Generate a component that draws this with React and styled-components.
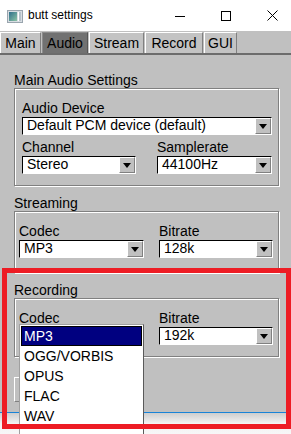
import styled, { createGlobalStyle } from "styled-components";

const GlobalStyle = createGlobalStyle`
  html, body {
    margin: 0;
    padding: 0;
  }
  body {
    width: 291px;
    height: 434px;
    overflow: hidden;
    background: #f6f6f6;
    font-family: "Liberation Sans", Arial, sans-serif;
  }
`;

const tabs = [
  { name: "Main", w: 41 },
  { name: "Audio", w: 46, active: true },
  { name: "Stream", w: 55 },
  { name: "Record", w: 58 },
  { name: "GUI", w: 33 },
];

const codecs = ["MP3", "OGG/VORBIS", "OPUS", "FLAC", "WAV"];

const Choice = ({ label, value }) => (
  <Field>
    <FieldLabel>{label}</FieldLabel>
    <ChoiceBox>
      <ChoiceText>{value}</ChoiceText>
      <ArrowButton>
        <Arrow />
      </ArrowButton>
    </ChoiceBox>
  </Field>
);

const AppIcon = () => (
  <svg width="16" height="13" viewBox="0 0 16 13">
    <defs>
      <linearGradient id="ico" x1="0" y1="0" x2="1" y2="1">
        <stop offset="0" stopColor="#2f6f8c" />
        <stop offset="1" stopColor="#8cc4a4" />
      </linearGradient>
    </defs>
    <rect x="0.5" y="0.5" width="15" height="12" fill="#d8dde2" stroke="#9aa5ae" />
    <rect x="2" y="2" width="8" height="9" fill="url(#ico)" />
    <rect x="11" y="2" width="1" height="9" fill="#fff" />
    <rect x="12" y="2" width="2" height="9" fill="#b7c3cc" />
  </svg>
);

export default function App() {
  return (
    <>
      <GlobalStyle />
      <Screen>
        <Window>
          <TitleBar>
            <IconSlot>
              <AppIcon />
            </IconSlot>
            <TitleText>butt settings</TitleText>
            <Controls>
              <ControlButton>
                <svg width="10" height="10" viewBox="0 0 10 10">
                  <line x1="0" y1="5.5" x2="10" y2="5.5" stroke="#000" />
                </svg>
              </ControlButton>
              <ControlButton>
                <svg width="10" height="10" viewBox="0 0 10 10">
                  <rect x="0.5" y="0.5" width="9" height="9" fill="none" stroke="#000" />
                </svg>
              </ControlButton>
              <ControlButton>
                <svg width="11" height="11" viewBox="0 0 11 11">
                  <path d="M0.5 0.5 L10.5 10.5 M10.5 0.5 L0.5 10.5" stroke="#000" strokeWidth="1" />
                </svg>
              </ControlButton>
            </Controls>
          </TitleBar>

          <TabBar>
            {tabs.map((t) => (
              <Tab key={t.name} $w={t.w} $active={t.active}>
                {t.name}
              </Tab>
            ))}
          </TabBar>

          <TabPanel>
            <SectionTitle>Main Audio Settings</SectionTitle>
            <Group $pad="12px 6px 11px 7px">
              <Choice label="Audio Device" value="Default PCM device (default)" />
              <Row $cols="114px 115px" $gap="21px">
                <Choice label="Channel" value="Stereo" />
                <Choice label="Samplerate" value="44100Hz" />
              </Row>
            </Group>

            <SectionTitle $top={10}>Streaming</SectionTitle>
            <Group $pad="12px 5px 14px 4px">
              <Row $cols="125px 114px" $gap="15px">
                <Choice label="Codec" value="MP3" />
                <Choice label="Bitrate" value="128k" />
              </Row>
            </Group>

            <SectionTitle $top={10}>Recording</SectionTitle>
            <Group $pad="12px 5px 11px 4px">
              <Row $cols="125px 114px" $gap="15px">
                <Choice label="Codec" value="MP3" />
                <Choice label="Bitrate" value="192k" />
              </Row>
            </Group>

            <PlainButton />
          </TabPanel>
        </Window>
        <Desktop />

        <Popup>
          {codecs.map((c, i) => (
            <MenuItem key={c} $sel={i === 0}>
              {c}
            </MenuItem>
          ))}
        </Popup>

        <RedMark />
      </Screen>
    </>
  );
}

const Screen = styled.div`
  position: relative;
  width: 291px;
  height: 434px;
  overflow: hidden;
`;

const Window = styled.div`
  box-sizing: border-box;
  height: 413px;
  display: flex;
  flex-direction: column;
  background: #fff;
  border-bottom: 1px solid #1883d7;
`;

const TitleBar = styled.div`
  height: 31px;
  flex: none;
  display: flex;
  align-items: center;
  background: #fff;
`;

const IconSlot = styled.div`
  display: flex;
  margin-left: 7px;
  margin-top: 1px;
`;

const TitleText = styled.div`
  margin-left: 5px;
  font-size: 12px;
  line-height: 14px;
  color: #000;
  margin-top: -1px;
`;

const Controls = styled.div`
  margin-left: auto;
  margin-right: -4px;
  display: flex;
`;

const ControlButton = styled.div`
  width: 46px;
  height: 31px;
  display: flex;
  align-items: center;
  justify-content: center;
`;

const TabBar = styled.div`
  box-sizing: border-box;
  height: 22px;
  flex: none;
  padding-top: 1px;
  display: flex;
  gap: 1px;
  background: #c0c0c0;
`;

const Tab = styled.div`
  box-sizing: border-box;
  width: ${(p) => p.$w}px;
  height: 21px;
  display: flex;
  align-items: center;
  justify-content: center;
  font-size: 14px;
  line-height: 16px;
  color: #000;
  background: ${(p) => (p.$active ? "#717171" : "#c3c3c3")};
  border-top: 1px solid ${(p) => (p.$active ? "#8c8c8c" : "#fff")};
  border-left: 1px solid ${(p) => (p.$active ? "#8c8c8c" : "#fff")};
  border-right: 1px solid ${(p) => (p.$active ? "#555" : "#808080")};
`;

const TabPanel = styled.div`
  flex: 1;
  display: flex;
  flex-direction: column;
  background: #c0c0c0;
  border-top: 2px solid #6c6c6c;
  padding-top: 18px;
`;

const SectionTitle = styled.div`
  margin-top: ${(p) => p.$top || 0}px;
  padding-left: 14px;
  font-size: 14px;
  line-height: 15px;
  color: #000;
`;

const Group = styled.div`
  margin: 0 12px 0 14px;
  padding: ${(p) => p.$pad};
  display: flex;
  flex-direction: column;
  gap: 5px;
  border: 1px solid #808080;
  box-shadow: inset 1px 1px 0 #fff, 1px 1px 0 #fff;
`;

const Row = styled.div`
  display: grid;
  grid-template-columns: ${(p) => p.$cols};
  column-gap: ${(p) => p.$gap};
`;

const Field = styled.div`
  display: flex;
  flex-direction: column;
  gap: 2px;
`;

const FieldLabel = styled.div`
  font-size: 14px;
  line-height: 14px;
  color: #000;
  white-space: nowrap;
`;

const ChoiceBox = styled.div`
  box-sizing: border-box;
  height: 18px;
  display: flex;
  background: #fff;
  border: 1px solid;
  border-color: #000 #fff #fff #000;
`;

const ChoiceText = styled.div`
  flex: 1;
  padding-left: 4px;
  font-size: 14px;
  line-height: 15px;
  color: #000;
  white-space: nowrap;
  overflow: hidden;
`;

const ArrowButton = styled.div`
  box-sizing: border-box;
  width: 16px;
  flex: none;
  display: flex;
  align-items: center;
  justify-content: center;
  background: #c0c0c0;
  border: 1px solid;
  border-color: #fff #808080 #808080 #fff;
`;

const Arrow = styled.div`
  width: 0;
  height: 0;
  border-left: 4px solid transparent;
  border-right: 4px solid transparent;
  border-top: 5px solid #000;
`;

const PlainButton = styled.div`
  box-sizing: border-box;
  margin: 20px 0 0 14px;
  width: 100px;
  height: 25px;
  background: #c0c0c0;
  border: 1px solid;
  border-color: #fff #808080 #808080 #fff;
`;

const Desktop = styled.div`
  height: 21px;
  background: linear-gradient(to bottom, #cdcdcd, #f3f3f3 50%, #f7f7f7);
`;

const Popup = styled.div`
  position: absolute;
  left: 19px;
  top: 324px;
  box-sizing: border-box;
  width: 125px;
  height: 112px;
  padding: 1px;
  background: #fff;
  border: 1px solid;
  border-color: #a0a0a0 #5a5a5a #5a5a5a #a0a0a0;
`;

const MenuItem = styled.div`
  box-sizing: border-box;
  height: 20px;
  padding-left: 2px;
  font-size: 14px;
  line-height: 18px;
  white-space: nowrap;
  color: ${(p) => (p.$sel ? "#fff" : "#000")};
  background: ${(p) => (p.$sel ? "#000080" : "transparent")};
  border: 1px solid ${(p) => (p.$sel ? "#000" : "transparent")};
`;

const RedMark = styled.div`
  position: absolute;
  left: 2px;
  top: 268px;
  box-sizing: border-box;
  width: 289px;
  height: 161px;
  border: 5px solid #ed1c24;
  pointer-events: none;
`;
